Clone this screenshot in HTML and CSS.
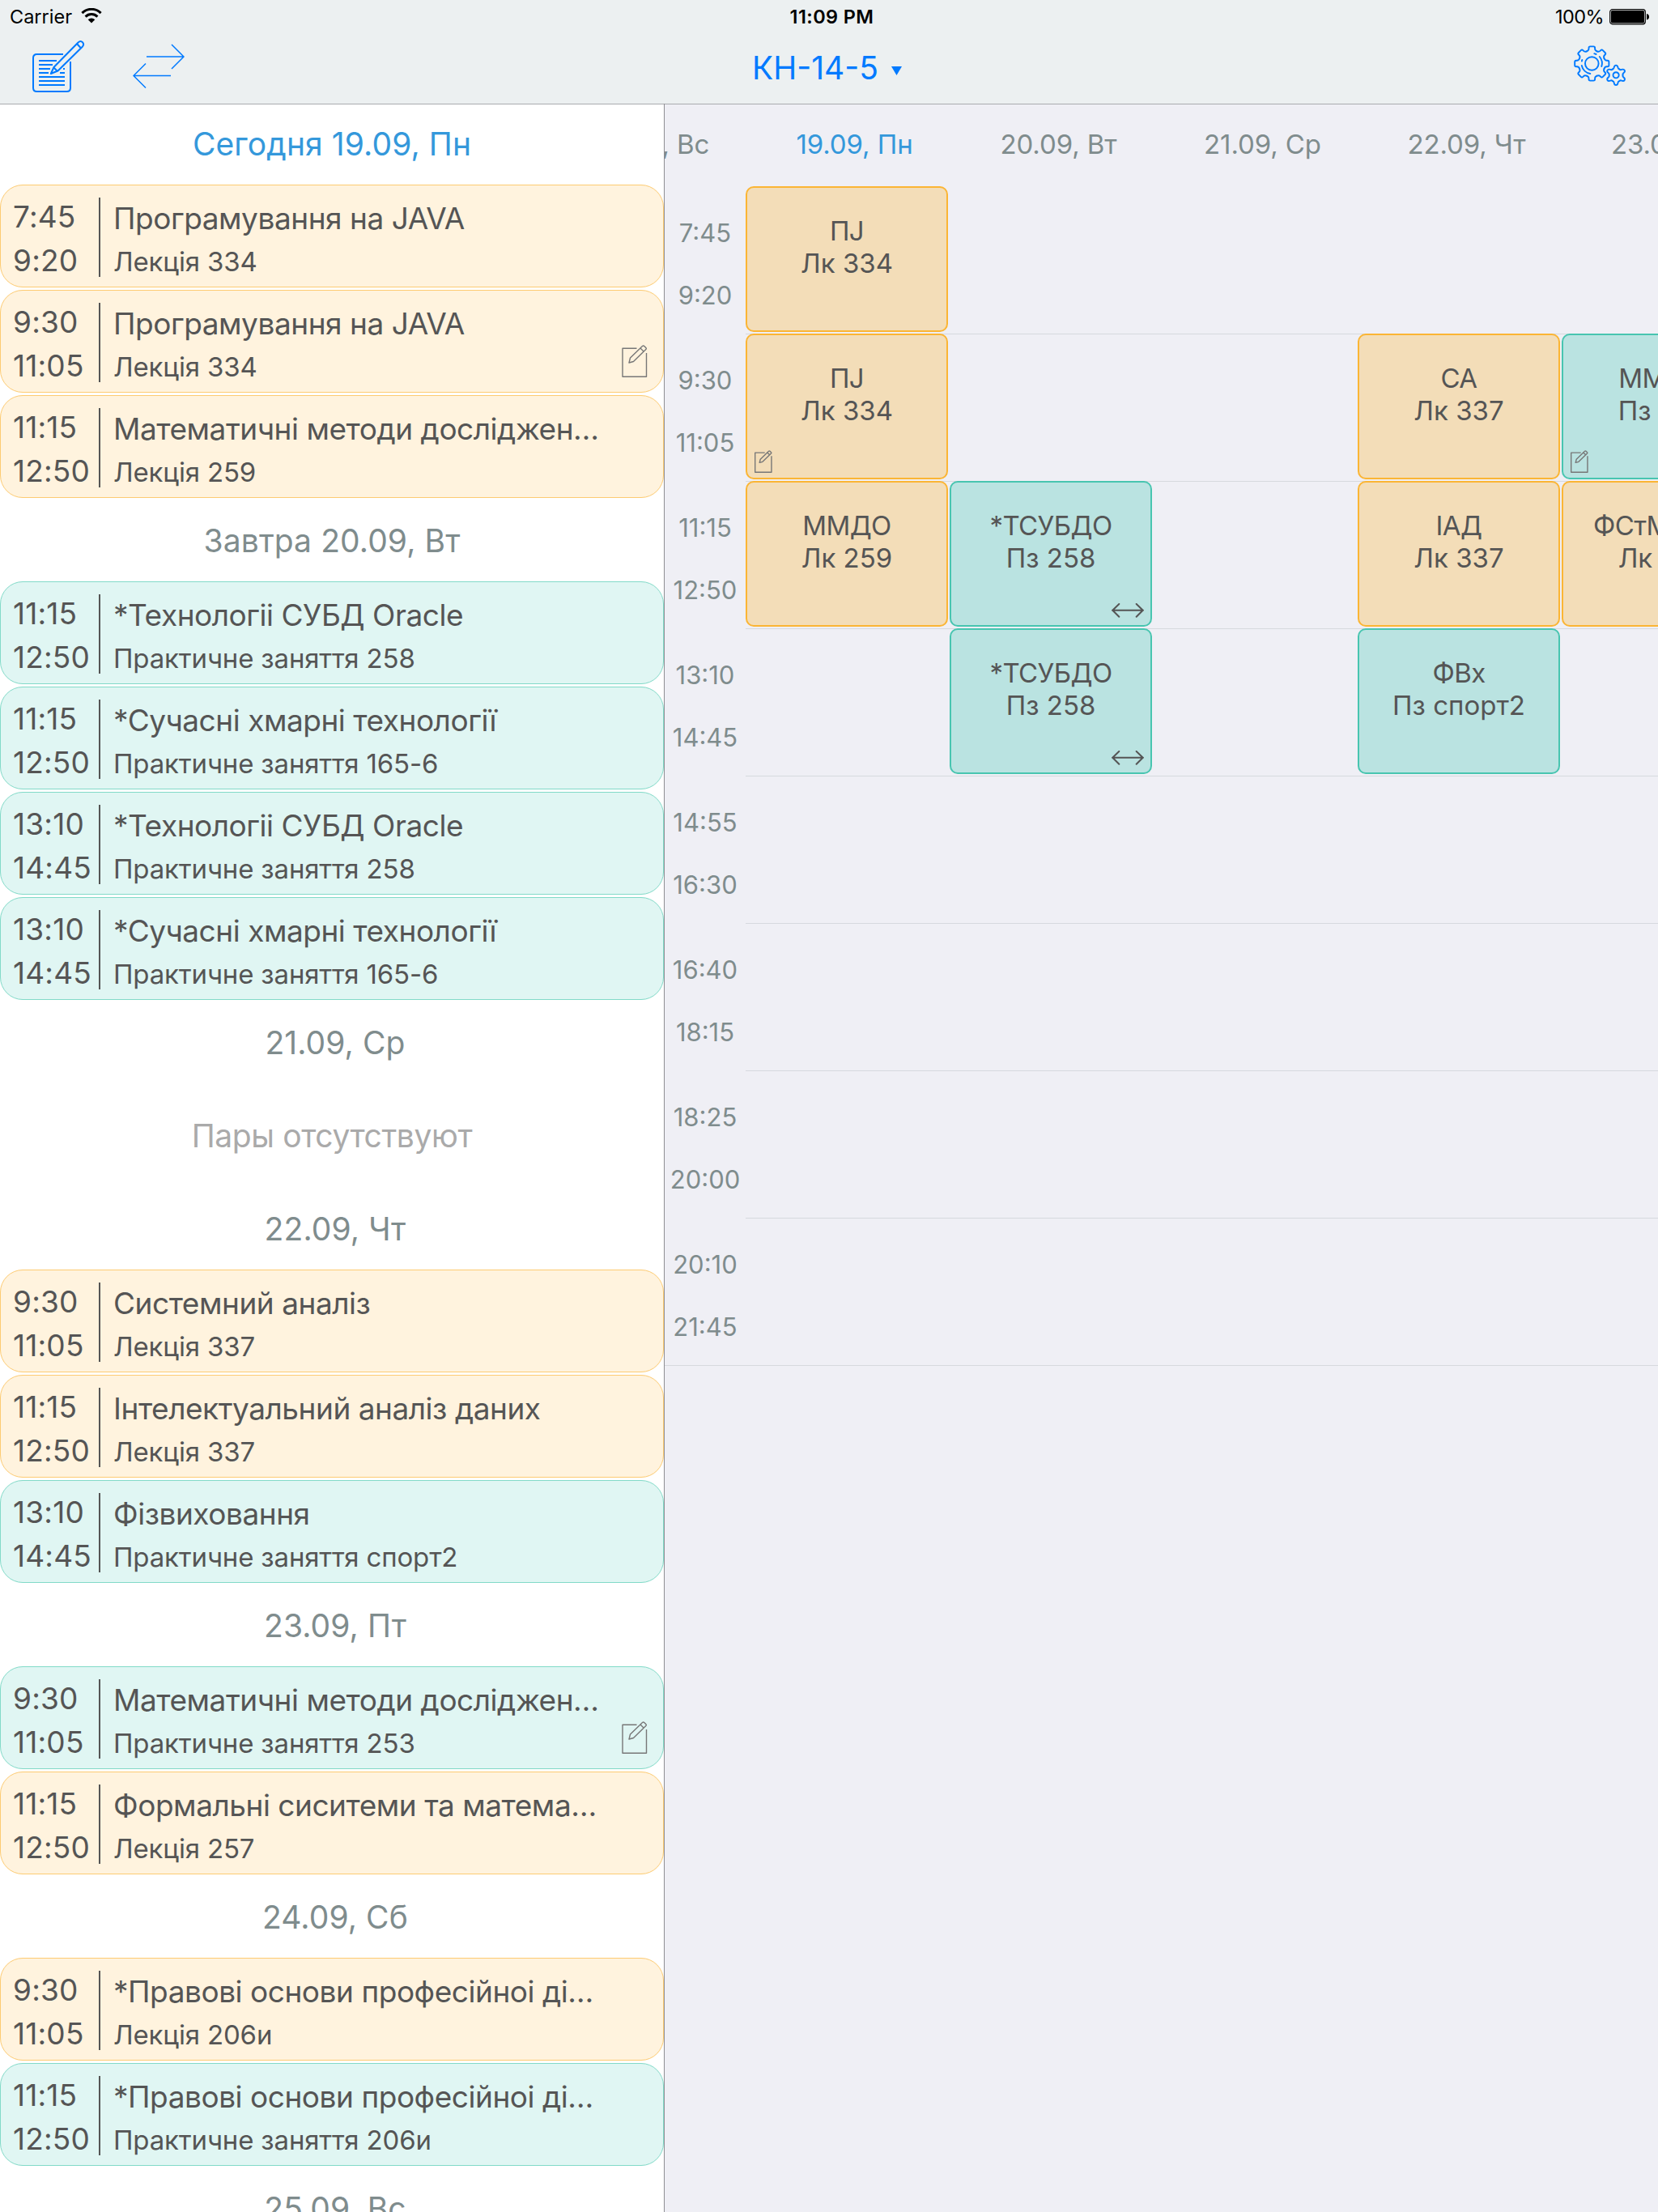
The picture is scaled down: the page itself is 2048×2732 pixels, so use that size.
FILE: index.html
```html
<!DOCTYPE html>
<html lang="uk">
<head>
<meta charset="utf-8">
<title>КН-14-5</title>
<link rel="stylesheet" href="styles.css">
</head>
<body>
<svg class="defs" aria-hidden="true">
  <symbol id="note" viewBox="0 0 32 40">
    <path d="M18.500 4.200H1V39.200H30.500V10M9 22l1.500-6L25.500 1.500q1.200-1 2.300 0l2 2q1 1 0 2L14.500 20.500zM23 4l4.500 4.500" fill="none" stroke="currentColor" stroke-width="1.400" stroke-linejoin="round" vector-effect="non-scaling-stroke"/>
  </symbol>
  <symbol id="swap" viewBox="0 0 40 18">
    <path d="M1 8.700H39M9.300 1L1.300 8.700l8 8M30.700 1l8 7.700-8 8" fill="none" stroke="currentColor" stroke-width="2" stroke-linecap="round" stroke-linejoin="round"/>
  </symbol>
</svg>

<header class="topbar">
  <div class="status">
    <div class="status-left"><span>Carrier</span>
      <svg class="wifi" viewBox="0 0 26 19"><path d="M1.400 6.100a16.400 16.400 0 0 1 23.200 0M5.600 10.600a10.500 10.500 0 0 1 14.800 0" fill="none" stroke="#000" stroke-width="3"/><path d="M13 18.500l-4.300-4.300a6 6 0 0 1 8.600 0z"/></svg>
    </div>
    <div class="clock">11:09 PM</div>
    <div class="status-right"><span class="percent">100%</span>
      <svg class="battery" viewBox="0 0 50 20"><rect x=".7" y=".7" width="43.600" height="18.100" rx="3" fill="none" stroke="#000" stroke-width="1.200"/><rect x="2" y="2" width="41" height="15.500" rx="1.500"/><path d="M46 6q3 .5 3 3.700t-3 3.700z"/></svg>
    </div>
  </div>
  <div class="nav">
    <div class="nav-left">
      <svg class="ico-edit" viewBox="0 0 64 64"><g fill="none" stroke="#007aff" stroke-width="2" stroke-linejoin="round"><path d="M38 17H5.500Q1 17 1 21.500V58.500Q1 63 5.500 63H42.500Q47 63 47 58.500V26"/><path d="M8 25H30M8 30H25M8 35H22M8 40H20M8 45H40M8 50H40M8 55H40M38 35H40M34 40H40"/><path d="M22.800 41L26.500 33L56.500 2.500Q59.500-.3 62 2.200Q64.500 4.800 61.500 8L31.500 37.500zM26.500 33.500L31 38M55 4L60 9.500"/></g></svg>
      <svg class="ico-swap" viewBox="0 0 64 56"><path d="M17 16H63M48 1l15 15-15 15M47 39.500H1.500M16 24.500l-15 15 15 15" fill="none" stroke="#007aff" stroke-width="1.500"/></svg>
    </div>
    <div class="title">КН-14-5<svg class="caret" viewBox="0 0 13 11"><path d="M0 0H13L6.500 11z" fill="#007aff"/></svg></div>
    <svg class="ico-gears" viewBox="0 0 66 52"><g fill="none" stroke="#007aff" stroke-width="1.900" stroke-linecap="round" stroke-linejoin="round">
      <g transform="translate(22.300 22.500)">
        <path id="t" d="M-6.300-15.200Q-3.800-16.200-3.800-18.300V-19.300Q-3.800-21.100-2-21.100H2Q3.800-21.100 3.800-19.300V-18.300Q3.800-16.200 6.300-15.200"/><use href="#t" transform="rotate(45)"/><use href="#t" transform="rotate(90)"/><use href="#t" transform="rotate(135)"/><use href="#t" transform="rotate(180)"/><use href="#t" transform="rotate(225)"/><use href="#t" transform="rotate(270)"/><use href="#t" transform="rotate(315)"/>
        <circle r="8.300"/>
        <path d="M9.500-8.500A12.700 12.700 0 0 1 12 3.500M-12.500 2.500A12.700 12.700 0 0 0-2 12.500M3-12.300l2.300.8M-12-4.500l-.4 1.500"/>
      </g>
      <g transform="translate(52.100 36.800)">
        <path id="s" d="M-4.200-7.300Q-2.500-7.800-2.400-9.500Q-2-12.200 0-12.200Q2-12.200 2.400-9.500Q2.500-7.800 4.200-7.300"/><use href="#s" transform="rotate(60)"/><use href="#s" transform="rotate(120)"/><use href="#s" transform="rotate(180)"/><use href="#s" transform="rotate(240)"/><use href="#s" transform="rotate(300)"/>
        <circle r="3.600"/>
      </g></g></svg>
  </div>
</header>

<main class="split">
  <section class="agenda">
    <h2 class="day today">Сегодня 19.09, Пн</h2>
    <article class="card lecture"><div class="hours"><span>7:45</span><span>9:20</span></div><i class="bar"></i><div class="info"><b>Програмування на JAVA</b><span>Лекція 334</span></div></article>
    <article class="card lecture"><div class="hours"><span>9:30</span><span>11:05</span></div><i class="bar"></i><div class="info"><b>Програмування на JAVA</b><span>Лекція 334</span></div><svg class="note"><use href="#note"/></svg></article>
    <article class="card lecture"><div class="hours"><span>11:15</span><span>12:50</span></div><i class="bar"></i><div class="info"><b>Математичні методи досліджен…</b><span>Лекція 259</span></div></article>

    <h2 class="day">Завтра 20.09, Вт</h2>
    <article class="card practice"><div class="hours"><span>11:15</span><span>12:50</span></div><i class="bar"></i><div class="info"><b>*Технологіі СУБД Oracle</b><span>Практичне заняття 258</span></div></article>
    <article class="card practice"><div class="hours"><span>11:15</span><span>12:50</span></div><i class="bar"></i><div class="info"><b>*Сучасні хмарні технології</b><span>Практичне заняття 165-6</span></div></article>
    <article class="card practice"><div class="hours"><span>13:10</span><span>14:45</span></div><i class="bar"></i><div class="info"><b>*Технологіі СУБД Oracle</b><span>Практичне заняття 258</span></div></article>
    <article class="card practice"><div class="hours"><span>13:10</span><span>14:45</span></div><i class="bar"></i><div class="info"><b>*Сучасні хмарні технології</b><span>Практичне заняття 165-6</span></div></article>

    <h2 class="day plain">21.09, Ср</h2>
    <p class="empty">Пары отсутствуют</p>

    <h2 class="day plain">22.09, Чт</h2>
    <article class="card lecture"><div class="hours"><span>9:30</span><span>11:05</span></div><i class="bar"></i><div class="info"><b>Системний аналіз</b><span>Лекція 337</span></div></article>
    <article class="card lecture"><div class="hours"><span>11:15</span><span>12:50</span></div><i class="bar"></i><div class="info"><b>Інтелектуальний аналіз даних</b><span>Лекція 337</span></div></article>
    <article class="card practice"><div class="hours"><span>13:10</span><span>14:45</span></div><i class="bar"></i><div class="info"><b>Фізвиховання</b><span>Практичне заняття спорт2</span></div></article>

    <h2 class="day plain">23.09, Пт</h2>
    <article class="card practice"><div class="hours"><span>9:30</span><span>11:05</span></div><i class="bar"></i><div class="info"><b>Математичні методи досліджен…</b><span>Практичне заняття 253</span></div><svg class="note"><use href="#note"/></svg></article>
    <article class="card lecture"><div class="hours"><span>11:15</span><span>12:50</span></div><i class="bar"></i><div class="info"><b>Формальні сиситеми та матема…</b><span>Лекція 257</span></div></article>

    <h2 class="day plain">24.09, Сб</h2>
    <article class="card lecture"><div class="hours"><span>9:30</span><span>11:05</span></div><i class="bar"></i><div class="info"><b>*Правові основи професійноі ді…</b><span>Лекція 206и</span></div></article>
    <article class="card practice"><div class="hours"><span>11:15</span><span>12:50</span></div><i class="bar"></i><div class="info"><b>*Правові основи професійноі ді…</b><span>Практичне заняття 206и</span></div></article>

    <h2 class="day plain">25.09, Вс</h2>
  </section>

  <section class="week">
    <div class="dates"><span class="past">18.09, Вс</span><span class="today">19.09, Пн</span><span>20.09, Вт</span><span>21.09, Ср</span><span>22.09, Чт</span><span>23.09, Пт</span></div>
    <div class="row">
      <div class="slot"><span>7:45</span><span>9:20</span></div>
      <div class="lane"><div class="event lecture c1">ПJ<br>Лк 334</div></div>
    </div>
    <div class="row">
      <div class="slot"><span>9:30</span><span>11:05</span></div>
      <div class="lane"><div class="event lecture c1">ПJ<br>Лк 334<svg class="mini-note"><use href="#note"/></svg></div><div class="event lecture c4">СА<br>Лк 337</div><div class="event practice c5">ММДО<br>Пз 253<svg class="mini-note"><use href="#note"/></svg></div></div>
    </div>
    <div class="row">
      <div class="slot"><span>11:15</span><span>12:50</span></div>
      <div class="lane"><div class="event lecture c1">ММДО<br>Лк 259</div><div class="event practice c2">*ТСУБДО<br>Пз 258<svg class="mini-swap"><use href="#swap"/></svg></div><div class="event lecture c4">ІАД<br>Лк 337</div><div class="event lecture c5">ФСтМЛША<br>Лк 257</div></div>
    </div>
    <div class="row">
      <div class="slot"><span>13:10</span><span>14:45</span></div>
      <div class="lane"><div class="event practice c2">*ТСУБДО<br>Пз 258<svg class="mini-swap"><use href="#swap"/></svg></div><div class="event practice c4">ФВх<br>Пз спорт2</div></div>
    </div>
    <div class="row"><div class="slot"><span>14:55</span><span>16:30</span></div><div class="lane"></div></div>
    <div class="row"><div class="slot"><span>16:40</span><span>18:15</span></div><div class="lane"></div></div>
    <div class="row"><div class="slot"><span>18:25</span><span>20:00</span></div><div class="lane"></div></div>
    <div class="row"><div class="slot"><span>20:10</span><span>21:45</span></div><div class="lane"></div></div>
    <div class="end"></div>
  </section>
</main>
</body>
</html>
```
FILE: styles.css
```css
* { box-sizing: border-box; }
html, body { margin: 0; height: 2732px; overflow: hidden; }
body {
  width: 2048px;
  display: flex;
  flex-direction: column;
  background: #fff;
  color: #555;
  font-family: Inter, "Noto Sans", sans-serif;
  font-weight: 400;
}
svg { display: block; flex: none; }
.defs { position: absolute; width: 0; height: 0; }

/* status bar and navigation */
.topbar { height: 129px; flex: none; background: #ecf0f1; border-bottom: 1px solid #a9abaf; }
.status {
  height: 40px;
  display: grid;
  grid-template-columns: 1fr auto 1fr;
  color: #000;
  font-size: 23.5px;
  line-height: 41px;
}
.status-left, .status-right { display: flex; }
.status-left { padding-left: 12px; }
.status-right { justify-content: flex-end; padding-right: 10px; }
.clock { font-weight: 600; padding-left: 7px; letter-spacing: .4px; }
.percent { letter-spacing: -.6px; }
.wifi { width: 26px; height: 19px; margin: 10px 0 0 11px; }
.battery { width: 50px; height: 20px; margin: 11px 0 0 7px; }
.nav {
  height: 88px;
  display: grid;
  grid-template-columns: 1fr auto 1fr;
}
.nav-left { display: flex; padding-left: 40px; }
.ico-edit { width: 64px; height: 64px; margin-top: 10px; overflow: visible; }
.ico-swap { width: 64px; height: 56px; margin: 14px 0 0 60px; }
.title {
  display: flex;
  padding-right: 5px;
  font-size: 39px;
  line-height: 88px;
  color: #007aff;
}
.caret { width: 13px; height: 11px; margin: 42px 0 0 16px; }
.ico-gears { width: 66px; height: 52px; margin: 16px 38px 0 0; justify-self: end; }

.split { flex: 1; min-height: 0; display: flex; }

/* agenda list */
.agenda {
  width: 821px;
  flex: none;
  margin-top: -1px;
  overflow: hidden;
  border-right: 1px solid #8e8e93;
}
.day {
  margin: 0;
  height: 100px;
  line-height: 100px;
  text-align: center;
  font-size: 39px;
  font-weight: 400;
  letter-spacing: .1px;
  color: #7f8c8d;
}
.day.plain { padding-left: 8px; }
.today, .day.today { color: #3498db; }
.empty { margin: 0; height: 130px; line-height: 130px; text-align: center; font-size: 39px; letter-spacing: -.4px; color: #aaa; }
.card {
  position: relative;
  display: flex;
  height: 127px;
  margin-bottom: 3px;
  border: 1px solid;
  border-radius: 28px;
}
.card.lecture { background: #fff3de; border-color: #fdcb72; }
.card.practice { background: #e0f6f3; border-color: #82dac8; }
.hours {
  width: 121px;
  padding: 12px 0 0 15px;
  display: flex;
  flex-direction: column;
  font-size: 37px;
  letter-spacing: .2px;
  line-height: 54px;
}
.bar { width: 2px; height: 98px; margin-top: 15px; background: #555; }
.info { display: flex; flex-direction: column; padding: 14px 0 0 16px; white-space: nowrap; }
.info b { font-size: 37px; font-weight: 400; line-height: 54px; letter-spacing: -.46px; }
.info span { font-size: 33px; line-height: 52px; letter-spacing: -.16px; }
.note { position: absolute; right: 19px; top: 67px; width: 32px; height: 40px; color: #777; }

/* week timetable */
.week { flex: 1; min-width: 0; overflow: hidden; background: #efeff5; }
.dates {
  display: flex;
  gap: 2px;
  height: 101px;
  margin-left: -152px;
  font-size: 33px;
  line-height: 98px;
  letter-spacing: -.1px;
  color: #7f8c8d;
}
.dates span { flex: none; width: 250px; padding-left: 19px; text-align: center; }
.dates .past { padding-left: 24px; }
.row { display: flex; height: 182px; }
.slot {
  width: 100px;
  flex: none;
  padding-top: 19px;
  display: flex;
  flex-direction: column;
  text-align: center;
  font-size: 31px;
  line-height: 77px;
  color: #7f8c8d;
}
.lane {
  flex: none;
  display: grid;
  grid-template-columns: repeat(5, 250px);
  column-gap: 2px;
  background: linear-gradient(#d6d9de, #d6d9de) top / 100% 1px no-repeat;
}
.row:nth-child(2) .lane { background: none; }
.event {
  position: relative;
  grid-row: 1;
  height: 180px;
  padding-top: 33px;
  border: 2px solid;
  border-radius: 10px;
  text-align: center;
  font-size: 33px;
  line-height: 40px;
}
.event::first-line { letter-spacing: -.6px; }
.event.lecture { background: #f3ddb8; border-color: #fbb534; }
.event.practice { background: #bae3e1; border-color: #48c5b0; }
.c1 { grid-column: 1; }
.c2 { grid-column: 2; }
.c4 { grid-column: 4; }
.c5 { grid-column: 5; }
.mini-note { position: absolute; left: 9px; top: 142px; width: 22px; height: 28px; color: #777; }
.mini-swap { position: absolute; right: 8px; bottom: 9px; width: 40px; height: 18px; }
.end { border-top: 1px solid #d6d9de; }
```
